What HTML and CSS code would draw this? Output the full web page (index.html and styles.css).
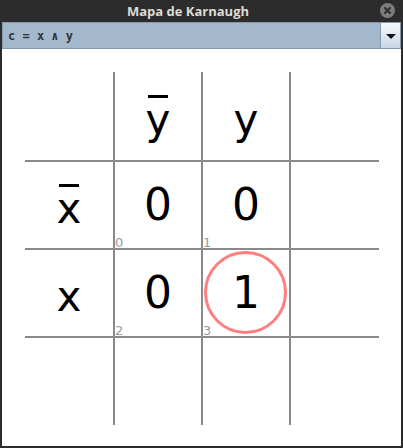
FILE: index.html
```html
<!DOCTYPE html>
<html>
<head>
<meta charset="utf-8">
<link rel="stylesheet" href="styles.css">
</head>
<body>
<div class="window">
  <div class="titlebar">
    <span class="title">Mapa de Karnaugh</span>
    <span class="close">
      <svg width="15" height="15" viewBox="0 0 15 15"><circle cx="7.5" cy="7.5" r="7.5" fill="#7c7c7c"/><path d="M5 5 L10 10 M10 5 L5 10" stroke="#2b2b2b" stroke-width="2" stroke-linecap="round"/></svg>
    </span>
  </div>
  <div class="content">
    <div class="combo">
      <div class="combo-field">c = x ∧ y</div>
      <div class="combo-btn"><span class="arrow"></span></div>
    </div>
    <div class="board">
      <div class="cell"></div>
      <div class="cell"><span class="letter bar">y</span></div>
      <div class="cell"><span class="letter">y</span></div>
      <div class="cell"></div>

      <div class="cell"><span class="letter bar">x</span></div>
      <div class="cell"><span class="digit">0</span><span class="idx">0</span></div>
      <div class="cell"><span class="digit">0</span><span class="idx">1</span></div>
      <div class="cell"></div>

      <div class="cell"><span class="letter">x</span></div>
      <div class="cell"><span class="digit">0</span><span class="idx">2</span></div>
      <div class="cell"><span class="ring"></span><span class="digit">1</span><span class="idx">3</span></div>
      <div class="cell"></div>

      <div class="cell"></div>
      <div class="cell"></div>
      <div class="cell"></div>
      <div class="cell"></div>
    </div>
  </div>
</div>
</body>
</html>
```
FILE: styles.css
```css
html, body {
  margin: 0;
  padding: 0;
  background: #2c2c2c;
}
.window {
  width: 403px;
  height: 448px;
  display: flex;
  flex-direction: column;
  background: #2c2c2c;
}
.titlebar {
  height: 22px;
  display: flex;
  align-items: center;
  justify-content: center;
  padding-right: 27px;
  position: relative;
}
.title {
  font-family: "Open Sans", "DejaVu Sans", sans-serif;
  font-weight: 700;
  font-size: 13px;
  color: #dfdbd2;
  margin-top: -1px;
}
.close {
  position: absolute;
  left: 380px;
  top: 3px;
  width: 15px;
  height: 15px;
  display: flex;
}
.content {
  flex: 1;
  margin: 0 2px 2px 2px;
  background: #ffffff;
  display: flex;
  flex-direction: column;
}
.combo {
  height: 27px;
  display: flex;
  box-sizing: border-box;
  border: 1px solid #8699ad;
}
.combo-field {
  flex: 1;
  background: #a4b8cd;
  font-family: "DejaVu Sans Mono", monospace;
  font-weight: 700;
  font-size: 12px;
  color: #333333;
  display: flex;
  align-items: center;
  padding-left: 5px;
}
.combo-btn {
  width: 19px;
  border-left: 1px solid #8699ad;
  background: linear-gradient(#f6f9fc, #c6d6e6);
  display: flex;
  align-items: center;
  justify-content: center;
}
.arrow {
  width: 0;
  height: 0;
  border-left: 5px solid transparent;
  border-right: 5px solid transparent;
  border-top: 5px solid #111111;
  margin-top: 1px;
}
.board {
  margin: 23px 0 0 23px;
  display: grid;
  grid-template-columns: 88px 86px 86px 88px;
  grid-template-rows: 88px 86px 86px 87px;
  gap: 2px;
  background: #8a8a8a;
  width: 354px;
}
.cell {
  background: #ffffff;
  display: flex;
  align-items: center;
  justify-content: center;
  position: relative;
  font-family: "DejaVu Sans", sans-serif;
  color: #000000;
}
.digit {
  font-size: 44px;
  line-height: 1;
}
.letter {
  font-size: 42px;
  line-height: 1;
  padding-top: 8px;
  position: relative;
}
.letter.bar::before {
  content: "";
  position: absolute;
  left: 2px;
  right: 2px;
  top: 4px;
  height: 3px;
  background: #000000;
}
.idx {
  position: absolute;
  left: 0;
  bottom: 0;
  font-size: 13px;
  line-height: 10px;
  color: #9a9a9a;
}
.ring {
  position: absolute;
  left: 1px;
  top: 1px;
  width: 83px;
  height: 83px;
  box-sizing: border-box;
  border: 3px solid #ff7f7f;
  border-radius: 50%;
}
```
